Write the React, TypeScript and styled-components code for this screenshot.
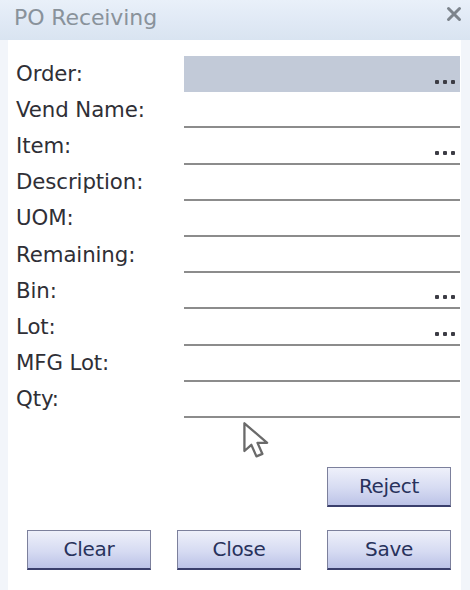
import React from "react";
import styled, { createGlobalStyle } from "styled-components";

const Global = createGlobalStyle`
  html, body { margin: 0; padding: 0; background: #ffffff; }
  #root { width: 470px; height: 590px; }
`;

const Window = styled.div`
  position: relative;
  width: 470px;
  height: 590px;
  box-sizing: border-box;
  background: #f2f5fa;
  display: flex;
  flex-direction: column;
  font-family: "DejaVu Sans", Verdana, sans-serif;
  overflow: hidden;
`;

const TitleBar = styled.div`
  height: 40px;
  flex: none;
  box-sizing: border-box;
  padding: 0 8px 0 14px;
  display: flex;
  align-items: center;
  justify-content: space-between;
  background: linear-gradient(#e9f0f9 0%, #e0e9f5 55%, #d9e4f1 100%);
`;

const Title = styled.div`
  font-size: 22px;
  color: #89929b;
  margin-top: -6px;
  letter-spacing: -0.1px;
`;

const CloseIcon = styled.svg`
  width: 16px;
  height: 16px;
  margin-top: -12px;
`;

const Body = styled.div`
  flex: 1;
  margin: 0 9px 0 8px;
  background: #ffffff;
  padding: 16px 0 0 8px;
  display: flex;
  flex-direction: column;
`;

const Form = styled.div`
  display: grid;
  grid-template-columns: 168px 276px;
  grid-auto-rows: 36.2px;
`;

const Label = styled.div`
  display: flex;
  align-items: center;
  font-size: 21.3px;
  color: #2f2f36;
  letter-spacing: -0.1px;
  padding-bottom: 2px;
`;

const Field = styled.div<{ $filled?: boolean }>`
  box-sizing: border-box;
  display: flex;
  justify-content: flex-end;
  align-items: flex-end;
  padding: 0 5px ${(p) => (p.$filled ? "6px" : "8px")} 0;
  background: ${(p) => (p.$filled ? "#c2cad8" : "transparent")};
  border-bottom: 2px solid ${(p) => (p.$filled ? "#c2cad8" : "#8c8c8c")};
`;

const Dots = styled.div`
  display: flex;
  gap: 4px;
`;

const Dot = styled.span`
  width: 4px;
  height: 4px;
  background: #3c3c44;
  border-radius: 1px;
`;

const Buttons = styled.div`
  display: grid;
  grid-template-columns: repeat(3, 124px);
  column-gap: 26px;
  row-gap: 23px;
  margin: 49px 0 0 11px;
`;

const Button = styled.button<{ $col?: number }>`
  grid-column: ${(p) => p.$col ?? "auto"};
  height: 40px;
  box-sizing: border-box;
  border: 1px solid #7c809c;
  border-bottom: 2px solid #3a3f6c;
  background: linear-gradient(#eef0fa 0%, #d6dbf2 55%, #bcc3e7 100%);
  font-family: "DejaVu Sans", Verdana, sans-serif;
  font-size: 20px;
  color: #28325c;
  letter-spacing: -0.3px;
  padding: 0;
  cursor: default;
`;

const Cursor = styled.svg`
  position: absolute;
  left: 242px;
  top: 421px;
  width: 31px;
  height: 40px;
`;

const fields: { label: string; filled?: boolean; dots?: boolean }[] = [
  { label: "Order:", filled: true, dots: true },
  { label: "Vend Name:" },
  { label: "Item:", dots: true },
  { label: "Description:" },
  { label: "UOM:" },
  { label: "Remaining:" },
  { label: "Bin:", dots: true },
  { label: "Lot:", dots: true },
  { label: "MFG Lot:" },
  { label: "Qty:" },
];

export default function App() {
  return (
    <>
      <Global />
      <Window>
        <TitleBar>
          <Title>PO Receiving</Title>
          <CloseIcon viewBox="0 0 16 16">
            <path d="M2.5 2.5 L13.5 13.5 M13.5 2.5 L2.5 13.5" stroke="#7d848c" strokeWidth="3" strokeLinecap="round" />
          </CloseIcon>
        </TitleBar>
        <Body>
          <Form>
            {fields.map((f) => (
              <React.Fragment key={f.label}>
                <Label>{f.label}</Label>
                <Field $filled={f.filled}>
                  {f.dots && (
                    <Dots>
                      <Dot />
                      <Dot />
                      <Dot />
                    </Dots>
                  )}
                </Field>
              </React.Fragment>
            ))}
          </Form>
          <Buttons>
            <Button $col={3}>Reject</Button>
            <Button>Clear</Button>
            <Button>Close</Button>
            <Button>Save</Button>
          </Buttons>
        </Body>
        <Cursor viewBox="0 0 20 26">
          <path
            d="M1.5 1.5 L1.5 19.5 L6 15.5 L9.3 23 L13.2 21.4 L10 14.2 L16.3 14.2 Z"
            fill="#ffffff"
            stroke="#6a6a6a"
            strokeWidth="1.5"
            strokeLinejoin="round"
          />
        </Cursor>
      </Window>
    </>
  );
}
